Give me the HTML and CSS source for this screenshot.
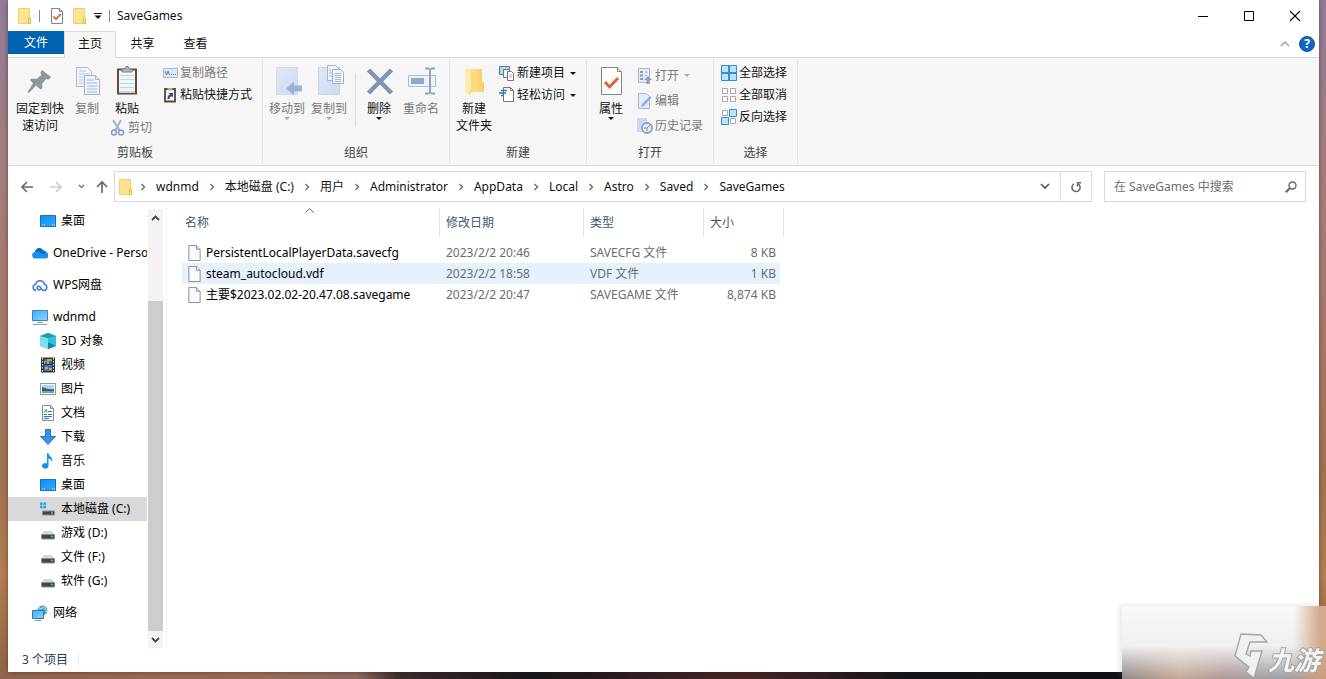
FILE: index.html
```html
<!DOCTYPE html>
<html lang="zh-CN">
<head>
<meta charset="utf-8">
<meta name="viewport" content="width=device-width, initial-scale=1">
<title>SaveGames</title>
<link rel="stylesheet" href="styles.css">
</head>
<body>
<svg class="sprite" aria-hidden="true">
  <defs>
    <linearGradient id="gold" x1="0" y1="0" x2="1" y2="0"><stop offset="0" stop-color="#ffe9a3"/><stop offset="1" stop-color="#f7d062"/></linearGradient>
    <linearGradient id="screen" x1="0" y1="0" x2="1" y2="1"><stop offset="0" stop-color="#3fb0fb"/><stop offset="1" stop-color="#8bd3fd"/></linearGradient>
    <linearGradient id="desk" x1="0" y1="0" x2="1" y2="1"><stop offset="0" stop-color="#0d8ef5"/><stop offset="1" stop-color="#2aa9fd"/></linearGradient>
    <linearGradient id="sheet" x1="0" y1="0" x2="1" y2="1"><stop offset="0" stop-color="#dfe8f8"/><stop offset="1" stop-color="#cddaf0"/></linearGradient>
  </defs>
  <symbol id="folder" viewBox="0 0 16 18"><path d="M1.500 1.500h11v10h1v5h-12z" fill="#fde391" stroke="#efcf6a"/><path d="M11.500 11.500h2v5h-2z" fill="#fbe9a8" stroke="#e6bb3a"/></symbol>
  <symbol id="checkpage" viewBox="0 0 14 16"><path d="M1.500.5h8l3 3v12h-11z" fill="#fdfdff" stroke="#858585"/><path d="M9.500.5v3h3" fill="none" stroke="#858585"/><path d="M3.500 8.500l2.500 2.500 5-5" fill="none" stroke="#e0552b" stroke-width="1.600"/></symbol>
  <symbol id="page" viewBox="0 0 13 17"><path d="M.5.500h8l4 4v12h-12z" fill="#fafaff" stroke="#8a8a8a"/><path d="M8.500.5v4h4" fill="#e9e9ee" stroke="#8a8a8a"/></symbol>
  <symbol id="desktop" viewBox="0 0 16 12"><path d="M.5.5h15v11h-15z" fill="url(#desk)" stroke="#1a6fb0"/><path d="M2 10h1M4 10h1M12 10h1M14 10h1" stroke="#d9f0ff"/></symbol>
  <symbol id="drive" viewBox="0 0 14 10"><path d="M3 1h8l2.500 3.500H.5z" fill="#d5d7d9"/><path d="M.5 4.500h13V9H.5z" fill="#3e4648" stroke="#8c9193"/><path d="M10 6.500h2" stroke="#38e05c" stroke-width="1.500"/></symbol>
  <symbol id="chev" viewBox="0 0 6 8"><path d="M1.500 1l3 3-3 3" fill="none" stroke="#666" stroke-width="1.300"/></symbol>
</svg>

<main class="window">
  <header class="titlebar">
    <svg class="i-folder"><use href="#folder"/></svg>
    <span class="tick"></span>
    <svg class="i-check"><use href="#checkpage"/></svg>
    <svg class="i-folder"><use href="#folder"/></svg>
    <button class="plain qat" aria-label="自定义快速访问工具栏"><svg width="8" height="6" viewBox="0 0 8 6"><path d="M0 .5h8" stroke="#222"/><path d="M.5 2.500h7L4 6z" fill="#111"/></svg></button>
    <span class="tick"></span>
    <h1 class="title">SaveGames</h1>
    <div class="controls">
      <button class="plain" aria-label="最小化"><svg width="12" height="12"><path d="M1 6.500h10" stroke="#000"/></svg></button>
      <button class="plain" aria-label="最大化"><svg width="12" height="12"><path d="M1.500 1.500h9v9h-9z" fill="none" stroke="#000"/></svg></button>
      <button class="plain" aria-label="关闭"><svg width="12" height="12"><path d="M1 1l10 10M11 1L1 11" stroke="#000" stroke-width="1.100"/></svg></button>
    </div>
  </header>

  <nav class="tabs">
    <button class="tab file">文件</button>
    <button class="tab active">主页</button>
    <button class="tab">共享</button>
    <button class="tab">查看</button>
    <div class="tabs-end">
      <button class="plain" aria-label="折叠功能区"><svg width="10" height="6"><path d="M1 5l4-4 4 4" fill="none" stroke="#999" stroke-width="1.200"/></svg></button>
      <button class="help" aria-label="帮助">?</button>
    </div>
  </nav>

  <section class="ribbon">
    <div class="group clipboard">
      <div class="tools">
        <button class="big wide"><svg width="32" height="32" viewBox="0 0 32 32"><path d="M18 5l9 7-2 2.500-3-.5-4 5 .5 4-2 1.500-4.500-4L5 28l-1.500-1L9 18.500 6 15l1.500-1.500 5 .5 5-4-1-2.500z" fill="#8c9799"/></svg><span>固定到快<br>速访问</span></button>
        <button class="big slim" disabled><svg width="32" height="32" viewBox="0 0 32 32"><path d="M5.500 2.500h11l4 4v15h-15z" fill="#eef3fc" stroke="#a9bbda"/><path d="M8 6h7M8 9h10M8 12h6M8 15h6M8 18h6" stroke="#b6c6e2"/><path d="M13.500 10.500h11l4 4v15h-15z" fill="#eef3fc" stroke="#9fb2d3"/><path d="M24.500 10.500v4h4M16 15h7M16 18h10M16 21h10M16 24h10M16 27h10" fill="none" stroke="#a3b7da"/></svg><span>复制</span></button>
        <div class="paste">
          <button class="big"><svg width="32" height="32" viewBox="0 0 32 32"><path d="M7 4.500h18v24H7z" fill="#f0f8fe" stroke="#6b4a32" stroke-width="2"/><path d="M8 27h16" stroke="#c7d5de" stroke-width="2"/><path d="M9 10.500h14M9 14.500h14M9 18.500h14M9 22.500h14" stroke="#b7d6ea"/><path d="M11 7V4h3l1-2.500h2L18 4h3v3z" fill="#b3b7ba" stroke="#7d8285"/></svg><span>粘贴</span></button>
          <button class="small" disabled><svg width="16" height="18" viewBox="0 0 16 18"><path d="M3 1l7 11M11 1L5 12" stroke="#9fb3cb" stroke-width="2"/><circle cx="4" cy="13.500" r="2.500" fill="none" stroke="#7f9fcc" stroke-width="1.500"/><circle cx="11" cy="13.500" r="2.500" fill="none" stroke="#7f9fcc" stroke-width="1.500"/></svg>剪切</button>
        </div>
        <div class="stack">
          <button class="small" disabled><svg width="16" height="16"><path d="M1.500 3.500h14v9h-14z" fill="#dde7f7" stroke="#a7b9d8"/><path d="M3 6l1.500 4L6 6l1.500 4" fill="none" stroke="#5a7db5"/><path d="M9 9.500h1M11 9.500h1M13 9.500h1" stroke="#5a7db5"/></svg>复制路径</button>
          <button class="small"><svg width="16" height="16"><path d="M3 2h10v12.500H3z" fill="#f2f8fd" stroke="#64442e" stroke-width="1.800"/><path d="M5.500 3.500V1h5v2.500z" fill="#a9adb0"/><path d="M5.500 12c0-3 1-4 2.500-4.500L6.500 6H11v4.500L9.700 9.200C8.500 9.500 7.500 10.500 7.500 12z" fill="#1f56a5"/></svg>粘贴快捷方式</button>
        </div>
      </div>
      <h2 class="caption">剪贴板</h2>
    </div>

    <div class="group organize">
      <div class="tools">
        <button class="big mid" disabled><svg width="32" height="32" viewBox="0 0 32 32"><path d="M5.500 2.500h21v27h-21z" fill="url(#sheet)" stroke="#d0dcef"/><path d="M15 23.500l8-7v4h8v6h-8v4z" fill="#9eb2d2"/></svg><span>移动到</span><i class="arrow"></i></button>
        <button class="big mid" disabled><svg width="32" height="32" viewBox="0 0 32 32"><path d="M5.500 2.500h21v27h-21z" fill="url(#sheet)" stroke="#c6d4ea"/><path d="M14.500.500h8l3 3v12h-11z" fill="#eff4fc" stroke="#a5b7d5"/><path d="M16 5h3M16 8h3M16 11h3" stroke="#a8bad8"/><path d="M19.500 4.500h8l3 3v11h-11z" fill="#eff4fc" stroke="#9cafcf"/><path d="M22 8.500h6M22 10.500h6M22 12.500h6M22 14.500h6M22 16.500h6" stroke="#a8bad8"/></svg><span>复制到</span><i class="arrow"></i></button>
        <span class="rule"></span>
        <button class="big mid"><svg width="32" height="32" viewBox="0 0 32 32"><path d="M5.500 5l23 23M28.500 5l-23 23" stroke="#7f93b5" stroke-width="4.500"/></svg><span>删除</span><i class="arrow"></i></button>
        <button class="big mid" disabled><svg width="32" height="32" viewBox="0 0 32 32"><path d="M3.500 10.500h27v11h-27z" fill="#eef3fb" stroke="#a9bcda"/><path d="M6 13h13v6H6z" fill="#8fa7cd"/><path d="M20 3.500h3.500l1.500 1 1.500-1H30M20 28.500h3.500l1.500-1 1.500 1H30M25 4v24" fill="none" stroke="#90a4c5" stroke-width="2"/></svg><span>重命名</span></button>
      </div>
      <h2 class="caption">组织</h2>
    </div>

    <div class="group">
      <div class="tools">
        <button class="big new"><svg width="32" height="32" viewBox="0 0 32 32"><path d="M7 4h17v13h2v10H7z" fill="url(#gold)"/><path d="M7 4l7 4v17l-3 5-4-3z" fill="#ffeaae"/><path d="M14 8v17l-3 5" fill="none" stroke="#efc95c"/></svg><span>新建<br>文件夹</span></button>
        <div class="stack">
          <button class="small"><svg width="16" height="16"><path d="M.5 1.500h10v8H.5z" fill="#a9dfef" stroke="#547e90"/><path d="M4.500 4.500h6v8h-6z" fill="#eef6fb" stroke="#777"/><path d="M8.500 6.500h4l2 2v7h-6z" fill="#fff" stroke="#777"/><path d="M10 10h3M10 12h3" stroke="#e0a0ae"/></svg>新建项目<i class="arrow"></i></button>
          <button class="small"><svg width="16" height="16"><path d="M4.500.5h7l3 3v11h-10z" fill="#fff" stroke="#777"/><path d="M11.500.5v3h3" fill="none" stroke="#777"/><path d="M2 3.500h6M0 6h7M2 8.500h3" stroke="#2879b9" stroke-width="1.300"/></svg>轻松访问<i class="arrow"></i></button>
        </div>
      </div>
      <h2 class="caption">新建</h2>
    </div>

    <div class="group">
      <div class="tools">
        <button class="big new"><svg width="32" height="32" viewBox="0 0 32 32"><path d="M6.500 2.500h16l4 4v23h-20z" fill="#fdfdff" stroke="#858585"/><path d="M22.500 2.500v4h4" fill="#ddd" stroke="#858585"/><path d="M10 17l4.500 5 8.500-9" fill="none" stroke="#df642c" stroke-width="2.800"/></svg><span>属性</span><i class="arrow"></i></button>
        <div class="stack loose">
          <button class="small" disabled><svg width="16" height="16"><path d="M1.500.5h11v14h-11z" fill="#e4ecf8" stroke="#a8b9d6"/><path d="M3 4h3M3 7.500h3M3 11h3" stroke="#8299c0" stroke-width="2"/><path d="M8 4h3M8 7.500h2" stroke="#a3b5d2"/><path d="M11 8l4 4h-2.500v4h-3v-4H7z" fill="#8a9fc2"/></svg>打开<i class="arrow"></i></button>
          <button class="small" disabled><svg width="16" height="16"><path d="M1.500.5h8l3 3v12h-11z" fill="#e3ebf8" stroke="#a8b9d6"/><path d="M4 14l1-3 8-8 1.500 1.500L7 13z" fill="#95acd0"/></svg>编辑</button>
          <button class="small" disabled><svg width="16" height="16"><path d="M0 0h10v14H0z" fill="#ccd9ef"/><circle cx="10" cy="10" r="5" fill="#e9effa" stroke="#8fa4c8" stroke-width="1.800"/><path d="M10 10l3-3M10 10H7M10 10v3" stroke="#7189b0"/></svg>历史记录</button>
        </div>
      </div>
      <h2 class="caption">打开</h2>
    </div>

    <div class="group select">
      <div class="tools">
        <div class="stack">
          <button class="small"><svg width="16" height="16"><path d="M.5.5h15v15H.5z" fill="#bce3fb" stroke="#318ed1"/><path d="M8 0v16M0 8h16" stroke="#318ed1" stroke-width="2"/></svg>全部选择</button>
          <button class="small"><svg width="16" height="16"><path d="M1.500 1.500h5v5h-5zM9.500 1.500h5v5h-5zM1.500 9.500h5v5h-5zM9.500 9.500h5v5h-5z" fill="#fff" stroke="#aaa"/></svg>全部取消</button>
          <button class="small"><svg width="16" height="16"><path d="M1.500 1.500h5v5h-5zM9.500 9.500h5v5h-5z" fill="#fff" stroke="#aaa"/><path d="M8.500.5h7v7h-7zM.5 8.500h7v7h-7z" fill="#bce3fb" stroke="#318ed1"/></svg>反向选择</button>
        </div>
      </div>
      <h2 class="caption">选择</h2>
    </div>
  </section>

  <section class="addressbar">
    <div class="moves">
      <button class="plain" aria-label="后退"><svg width="14" height="12"><path d="M13 6H2M7 1L2 6l5 5" fill="none" stroke="#666" stroke-width="1.600"/></svg></button>
      <button class="plain" aria-label="前进" disabled><svg width="14" height="12"><path d="M1 6h11M7 1l5 5-5 5" fill="none" stroke="#ccc" stroke-width="1.500"/></svg></button>
      <button class="plain" aria-label="最近位置"><svg width="7" height="5"><path d="M1 1l2.500 2.500L6 1" fill="none" stroke="#777" stroke-width="1.400"/></svg></button>
      <button class="plain" aria-label="上移"><svg width="12" height="14"><path d="M6 13V2M1 7l5-5 5 5" fill="none" stroke="#666" stroke-width="1.600"/></svg></button>
    </div>
    <div class="path">
      <svg class="i-folder"><use href="#folder"/></svg>
      <nav class="crumbs">
        <svg><use href="#chev"/></svg><a href="#">wdnmd</a>
        <svg><use href="#chev"/></svg><a href="#">本地磁盘 (C:)</a>
        <svg><use href="#chev"/></svg><a href="#">用户</a>
        <svg><use href="#chev"/></svg><a href="#">Administrator</a>
        <svg><use href="#chev"/></svg><a href="#">AppData</a>
        <svg><use href="#chev"/></svg><a href="#">Local</a>
        <svg><use href="#chev"/></svg><a href="#">Astro</a>
        <svg><use href="#chev"/></svg><a href="#">Saved</a>
        <svg><use href="#chev"/></svg><a href="#">SaveGames</a>
      </nav>
      <button class="plain history" aria-label="以前的位置"><svg width="10" height="7"><path d="M1 1l4 4 4-4" fill="none" stroke="#555" stroke-width="1.600"/></svg></button>
      <button class="plain refresh" aria-label="刷新"><svg width="12" height="12" viewBox="0 0 12 12"><path d="M4 2.900A4.100 4.100 0 1 0 8.200 3" fill="none" stroke="#666" stroke-width="1.500"/><path d="M11 1.700H7.500v3.800" fill="none" stroke="#666" stroke-width="1.400"/></svg></button>
    </div>
    <label class="search"><input type="text" placeholder="在 SaveGames 中搜索" aria-label="在 SaveGames 中搜索"><svg width="12" height="12"><circle cx="7.500" cy="4.500" r="3.500" fill="none" stroke="#666" stroke-width="1.400"/><path d="M5 7L.8 11.200" stroke="#666" stroke-width="2"/></svg></label>
  </section>

  <div class="content">
    <nav class="tree">
      <a class="node deep" href="#"><svg width="16" height="12"><use href="#desktop"/></svg>桌面</a>
      <a class="node root" href="#"><svg width="16" height="12" viewBox="0 0 16 12"><path d="M3 5a4.500 4.500 0 0 1 8.500-1.500A4 4 0 0 1 13 11H4A3.200 3.200 0 0 1 3 5z" fill="#0a6cc9"/><path d="M3 5c3-1.500 5 0 7 2l4-1.500A3 3 0 0 1 13 11.500H4A3.200 3.200 0 0 1 3 5z" fill="#1990e6"/></svg>OneDrive - Personal</a>
      <a class="node root" href="#"><svg width="16" height="13" viewBox="0 0 16 13"><path d="M4 11.500A3.200 3.200 0 0 1 3.700 5.200a4.400 4.400 0 0 1 8.600 0A3.200 3.200 0 0 1 12 11.500c-3 0-3-4-5-4.200C5 7.200 4.500 9 5.500 10c1 1 2.500.8 3.300 0" fill="none" stroke="#3c7be0" stroke-width="1.600"/></svg>WPS网盘</a>
      <a class="node root" href="#"><svg width="16" height="16"><path d="M.5 1.500h15v10H.5z" fill="url(#screen)" stroke="#3b83b8"/><path d="M5 13.500h6M1 15.500h14" stroke="#91a3ae"/></svg>wdnmd</a>
      <a class="node deep" href="#"><svg width="16" height="16"><path d="M8 0l8 3v10l-8 3-8-3V3z" fill="#31c3d8"/><path d="M0 3l8 2v11l-8-3z" fill="#7be0e8"/><path d="M8 0l8 3-8 2-8-2z" fill="#1b9cb4"/><path d="M8 9l8 4-8 3z" fill="#0c8ba8"/></svg>3D 对象</a>
      <a class="node deep" href="#"><svg width="16" height="16"><path d="M1 .5h14v15H1z" fill="#2f3438"/><path d="M4 2h8v5H4z" fill="#c8a43b"/><path d="M4 8h8v6H4z" fill="#3674c4"/><path d="M4 2h3v2H4zM9 4h3v3H9zM5 5h2v2H5z" fill="#2f68b0"/><path d="M5 10h3v2H5zM9 11h3v2H9z" fill="#d3ab3c"/><path d="M2.500 1v14M13.500 1v14" stroke="#eee" stroke-dasharray="1.500 1.500"/></svg>视频</a>
      <a class="node deep" href="#"><svg width="16" height="12"><path d="M.5.5h15v11H.5z" fill="#fff" stroke="#8e989e"/><path d="M2 2h12v8H2z" fill="#a9d5ef"/><path d="M2 4c4 1 7 3 12 2v3H2z" fill="#35665f"/><path d="M2 8h12v2H2z" fill="#6fa3c4"/></svg>图片</a>
      <a class="node deep" href="#"><svg width="16" height="16"><path d="M2.500.5h8l3 3v12h-11z" fill="#fff" stroke="#8a8a8a"/><path d="M10.500.5v3h3" fill="none" stroke="#8a8a8a"/><path d="M4 7.500l2-3 1 3M8 6.500h4M4 9.500h3M8 9.500h4M4 11.500h8M4 13.500h5" fill="none" stroke="#2e78b8"/></svg>文档</a>
      <a class="node deep" href="#"><svg width="16" height="16"><path d="M5.500.5h5v7h5L8 15.500.5 7.500h5z" fill="#3a92e8" stroke="#2873bd"/></svg>下载</a>
      <a class="node deep" href="#"><svg width="16" height="16"><path d="M7 0h1.500c.5 4 5 4 3.500 9-.5-2.500-2-3-3.500-3.500V13a3.200 2.800 0 1 1-1.500-2.500z" fill="#1490e8"/></svg>音乐</a>
      <a class="node deep" href="#"><svg width="16" height="12"><use href="#desktop"/></svg>桌面</a>
      <a class="node deep selected" href="#"><svg width="16" height="14" viewBox="0 0 16 14"><path d="M0 .5h2.500V3H0zM3.300.5H6V3H3.300zM0 3.800h2.500v2.500H0zM3.300 3.800H6v2.500H3.300z" fill="#19a9e0"/><path d="M4 7h9l2 2H2z" fill="#d5d7d9"/><path d="M2.500 9h12v4h-12z" fill="#3e4648" stroke="#8c9193"/><path d="M11 11h2" stroke="#38e05c" stroke-width="1.500"/></svg>本地磁盘 (C:)</a>
      <a class="node deep" href="#"><svg width="16" height="14" viewBox="0 -4 14 14"><use href="#drive" width="14" height="10"/></svg>游戏 (D:)</a>
      <a class="node deep" href="#"><svg width="16" height="14" viewBox="0 -4 14 14"><use href="#drive" width="14" height="10"/></svg>文件 (F:)</a>
      <a class="node deep" href="#"><svg width="16" height="14" viewBox="0 -4 14 14"><use href="#drive" width="14" height="10"/></svg>软件 (G:)</a>
      <a class="node root" href="#"><svg width="16" height="16"><circle cx="10.500" cy="5.500" r="5" fill="#57a5c8"/><path d="M7 3c3 2 4-2 6 0s1 4 2 4" fill="none" stroke="#bfe4ef"/><path d="M.5 5.500h11v8H.5z" fill="url(#screen)" stroke="#2f78ae"/><path d="M3 15.500h6" stroke="#7d9bb0"/></svg>网络</a>
    </nav>
    <div class="scroll">
      <button class="plain" aria-label="向上滚动"><svg width="9" height="6"><path d="M1 5l3.500-3.500L8 5" fill="none" stroke="#444" stroke-width="1.800"/></svg></button>
      <div class="track"></div>
      <div class="thumb"></div>
      <button class="plain" aria-label="向下滚动"><svg width="9" height="6"><path d="M1 1l3.500 3.500L8 1" fill="none" stroke="#444" stroke-width="1.800"/></svg></button>
    </div>
    <section class="files">
      <table>
        <colgroup><col class="c-name"><col class="c-date"><col class="c-type"><col class="c-size"></colgroup>
        <thead><tr>
          <th>名称<svg class="sort" width="9" height="5"><path d="M.5 4.500l4-4 4 4" fill="none" stroke="#666"/></svg></th><th>修改日期</th><th>类型</th><th>大小</th>
        </tr></thead>
        <tbody>
          <tr><td><span class="fname"><svg><use href="#page"/></svg>PersistentLocalPlayerData.savecfg</span></td><td>2023/2/2 20:46</td><td>SAVECFG 文件</td><td>8 KB</td></tr>
          <tr class="hover"><td><span class="fname"><svg><use href="#page"/></svg>steam_autocloud.vdf</span></td><td>2023/2/2 18:58</td><td>VDF 文件</td><td>1 KB</td></tr>
          <tr><td><span class="fname"><svg><use href="#page"/></svg>主要$2023.02.02-20.47.08.savegame</span></td><td>2023/2/2 20:47</td><td>SAVEGAME 文件</td><td>8,874 KB</td></tr>
        </tbody>
      </table>
    </section>
  </div>

  <footer class="status"><span>3 个项目</span></footer>
</main>

<aside class="watermark">
  <svg width="34" height="46" viewBox="-1 -1 34 46"><path d="M6 0L26 1 32 8 15 8 11 20 15 22 16 17 27 17 19 44 11 38 14 33 0 22z" fill="#f0f0f0" stroke="#a6a3a3" stroke-width="1.300"/></svg>
  <span>九游</span>
</aside>
</body>
</html>
```
FILE: styles.css
```css
* { box-sizing: border-box; }

body {
  margin: 0;
  min-height: 100vh;
  display: flex;
  padding: 0 7px 7px 8px;
  font: 12px/18px "Noto Sans", "Noto Sans CJK SC", sans-serif;
  color: #111;
  background:
    linear-gradient(90deg, #8d6450 0, #966b58 20%, #8a6660 27%, #3d2c2c 30%, #17141a 40%, #472628 56%, #17141a 68%, #0d0b10 100%) bottom / 100% 7px no-repeat,
    linear-gradient(180deg, #917c98 0, #a27c7c 25%, #a87868 50%, #a0714f 70%, #b27d4f 85%, #8f6245 100%);
}

.sprite { position: absolute; width: 0; height: 0; }

button, input { font: inherit; color: inherit; }
button { border: 0; background: none; padding: 0; }
svg { flex: none; display: block; }
h1, h2 { margin: 0; font: inherit; }
a { color: inherit; text-decoration: none; }

.plain { display: flex; align-items: center; justify-content: center; }

.window {
  flex: 1;
  min-width: 0;
  display: flex;
  flex-direction: column;
  background: #fff;
  box-shadow: 0 0 4px rgba(40, 20, 20, .5);
}

.i-folder { width: 16px; height: 18px; }
.i-check { width: 14px; height: 16px; }

/* title bar */
.titlebar { display: flex; align-items: center; height: 31px; padding-left: 9px; }
.tick { width: 1px; height: 12px; background: #888; margin: 0 10px 0 6px; }
.titlebar .i-check { margin-right: 8px; }
.qat { margin-left: 6px; }
.qat + .tick { margin: 0 7px; }
.controls { display: flex; margin-left: auto; padding-right: 1px; }
.controls .plain { width: 46px; height: 30px; }

/* tabs */
.tabs { display: flex; height: 27px; border-bottom: 1px solid #dadbdc; }
.tab { width: 53px; height: 25px; }
.tab.file { width: 56px; height: 23px; background: #0063b1; color: #fff; }
.tab.active {
  width: 52px;
  height: 27px;
  padding-bottom: 2px;
  background: #f6f6f6;
  border: 1px solid #dadbdc;
  border-bottom: 0;
}
.tabs-end { display: flex; align-items: center; gap: 9px; margin-left: auto; padding-right: 4px; }
.help {
  width: 16px;
  height: 16px;
  border-radius: 50%;
  border: 1px solid #1b4f86;
  background: #0a68cc;
  color: #fff;
  font-weight: 700;
  line-height: 14px;
}

/* ribbon */
.ribbon {
  display: flex;
  padding: 2px 0;
  background: #f6f6f6;
  border-bottom: 1px solid #dadbdc;
}
.group {
  display: flex;
  flex-direction: column;
  border-right: 1px solid #e2e3e4;
  padding: 2px 0 1px;
}
.tools { display: flex; min-height: 82px; padding: 0 10px 0 2px; }
.clipboard .tools { padding-left: 0; }
.organize .tools { padding: 0 7px 0 3px; }
.caption { text-align: center; line-height: 18px; color: #444; }
.big {
  display: flex;
  flex-direction: column;
  align-items: center;
  align-self: flex-start;
  padding-top: 3px;
  line-height: 17px;
  white-space: nowrap;
}
.big svg { margin-bottom: 3px; }
.wide { width: 64px; }
.slim { width: 30px; }
.mid { width: 42px; }
.new { width: 44px; }
.arrow {
  width: 0;
  height: 0;
  border: 3px solid transparent;
  border-top-color: #111;
  border-bottom-width: 0;
}
button:disabled { color: #7a7a7a; }
button:disabled .arrow { border-top-color: #aaa; }
.paste { width: 50px; display: flex; flex-direction: column; align-items: flex-end; }
.paste .big { width: 50px; padding-right: 0; margin-right: -2px; }
.small { display: flex; align-items: center; gap: 2px; height: 22px; white-space: nowrap; }
.small .arrow { margin-left: 3px; }
.stack { display: flex; flex-direction: column; padding-left: 3px; }
.clipboard .stack { padding-left: 10px; }
.loose { padding: 1px 0 0 4px; }
.loose .small { height: 25px; }
.select .stack { padding-left: 5px; }
.rule { width: 1px; height: 54px; margin: 11px 2px 0 5px; background: #dcdddd; }

/* address bar */
.addressbar { display: flex; align-items: center; padding: 5px 13px 4px 12px; }
.moves { display: flex; align-items: center; gap: 15px; width: 94px; }
.moves .plain:nth-child(3) { margin-right: -4px; }
.path { flex: 1; min-width: 0; display: flex; align-items: center; height: 31px; border: 1px solid #d9d9d9; padding-left: 3px; }
.crumbs { display: flex; align-items: center; flex: 1; min-width: 0; overflow: hidden; }
.crumbs svg { width: 6px; height: 8px; margin: 0 10px; }
.crumbs svg:first-child { margin-left: 6px; }
.history { width: 30px; height: 29px; }
.refresh { width: 31px; height: 29px; border-left: 1px solid #d9d9d9; }
.search { display: flex; align-items: center; width: 202px; height: 31px; margin-left: 12px; padding: 0 8px 0 9px; border: 1px solid #d9d9d9; }
.search input { flex: 1; min-width: 0; border: 0; padding: 0; outline: 0; background: none; }
.search input::placeholder { color: #6d6d6d; opacity: 1; }

/* content */
.content { flex: 1; display: flex; padding-top: 2px; }
.tree { width: 139px; padding-top: 1px; }
.node { display: flex; align-items: center; gap: 5px; height: 24px; white-space: nowrap; overflow: hidden; color: #000; }
.root { padding-left: 24px; margin-top: 8px; }
.deep { padding-left: 32px; }
.selected { background: #d9d8da; }
.scroll { display: flex; flex-direction: column; width: 18px; padding: 0 2px 0 1px; margin-top: 1px; }
.scroll .plain, .track { background: #f5f1f5; }
.scroll .plain { height: 17px; }
.track { flex: 75; }
.thumb { flex: 330; background: #cdcdcd; }
.files { flex: 1; margin-left: 1px; border-left: 1px solid #f2f2f2; padding-left: 15px; }
table { width: 602px; table-layout: fixed; border-spacing: 0; text-align: left; }
.c-name { width: 258px; }
.c-date { width: 144px; }
.c-type { width: 120px; }
.c-size { width: 80px; }
th { position: relative; height: 29px; padding: 0 6px; font-weight: 400; color: #44586f; border-right: 1px solid #e5e5e5; }
th:first-child { padding-left: 3px; }
.sort { position: absolute; top: 0; left: 50%; margin-left: -6px; }
td { height: 21px; padding: 0 0 0 6px; color: #6d6d6d; line-height: 18px; }
tbody::before { content: ""; display: block; height: 5px; }
td:first-child { color: #000; }
td:last-child { text-align: right; padding-right: 4px; border-right: 4px solid transparent; background-clip: padding-box; }
.hover td { background-color: #e5f1fc; }
.fname { display: flex; align-items: center; gap: 5px; }
.fname svg { width: 13px; height: 16px; }

/* status bar */
.status { display: flex; align-items: center; height: 24px; padding: 0 14px 1px; color: #1e395b; }
.status span { padding-right: 10px; border-right: 1px solid #eee; line-height: 14px; }

/* corner mark */
.watermark {
  position: fixed;
  right: 0;
  bottom: 0;
  width: 204px;
  height: 73px;
  display: flex;
  align-items: flex-end;
  justify-content: flex-end;
  padding-right: 6px;
  background:
    linear-gradient(90deg, transparent 84%, rgba(205, 158, 122, .85) 97%),
    linear-gradient(180deg, #f9f9f9 0, #efeff0 55%, rgba(235, 233, 233, .7) 72%, rgba(190, 175, 170, .3) 100%),
    linear-gradient(90deg, #777476 0, #c6a58e 28%, #a58c8c 50%, #8c9aa3 78%, #bd8d72 100%);
  box-shadow: -3px -1px 5px rgba(120, 120, 120, .16);
}
.watermark span {
  font: italic 700 26px/40px "Noto Sans CJK SC", sans-serif;
  color: #f4f4f4;
  -webkit-text-stroke: 2px #a6a3a3;
  paint-order: stroke;
}
```
